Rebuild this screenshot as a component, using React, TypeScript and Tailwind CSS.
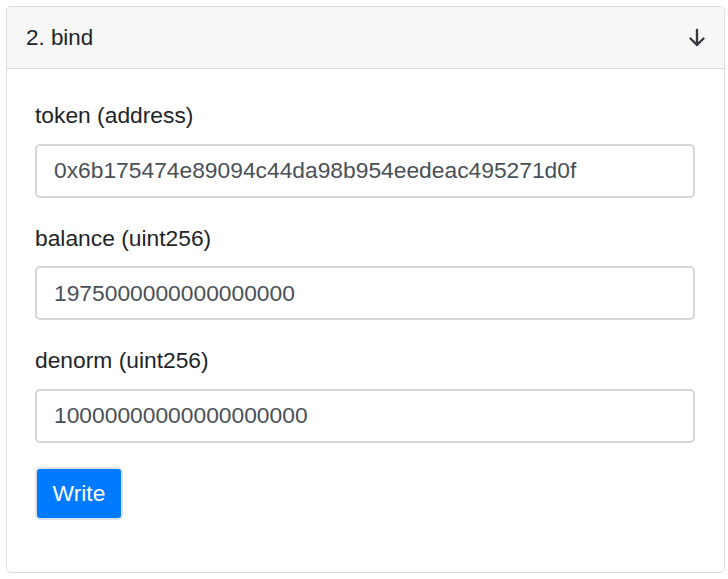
import React, { useState } from 'react';

const FIELDS = [
  { name: 'token', type: 'address', value: '0x6b175474e89094c44da98b954eedeac495271d0f' },
  { name: 'balance', type: 'uint256', value: '1975000000000000000' },
  { name: 'denorm', type: 'uint256', value: '10000000000000000000' },
];

export default function App() {
  const [values, setValues] = useState(FIELDS.map((f) => f.value));

  return (
    <div className="bg-white w-[728px] h-[579px] pt-[6px] pl-[6px] font-['Liberation_Sans',Arial,sans-serif]">
      {/* Method card */}
      <div className="w-[719px] h-[567px] border border-[#dcdcdc] rounded-[5px] overflow-hidden flex flex-col">
        <div className="h-[62px] bg-[#f7f7f8] border-b border-[#dcdcdc] flex items-center justify-between pl-[19px] pr-[18px] shrink-0">
          <span className="text-[22.4px] text-[#212529]">2. bind</span>
          <svg width="18" height="20" viewBox="0 0 18 20" fill="none" className="mt-[1px]">
            <path d="M9 2v15M2.5 10.5L9 17l6.5-6.5" stroke="#343a40" strokeWidth="2.4" strokeLinecap="round" strokeLinejoin="round" />
          </svg>
        </div>

        <div className="px-[28px] pt-[30px] flex flex-col">
          {FIELDS.map((f, i) => (
            <div key={f.name} className={i > 0 ? 'mt-[24px]' : ''}>
              <label className="block text-[22.8px] leading-[33.6px] text-[#212529] mb-[11px]">
                {f.name} ({f.type})
              </label>
              <input
                value={values[i]}
                onChange={(e) => setValues(values.map((v, j) => (j === i ? e.target.value : v)))}
                className="w-[660px] h-[54px] border-2 border-[#d3d7db] rounded-[5px] px-[17px] text-[22.8px] text-[#495057] bg-white outline-none font-['Liberation_Sans',Arial,sans-serif]"
              />
            </div>
          ))}

          <div className="mt-[24px]">
            <button className="w-[88px] h-[53px] bg-[#007bff] text-white text-[22.8px] rounded-[5px] border-2 border-[#dde3ea] font-['Liberation_Sans',Arial,sans-serif]">
              Write
            </button>
          </div>
        </div>
      </div>
    </div>
  );
}
